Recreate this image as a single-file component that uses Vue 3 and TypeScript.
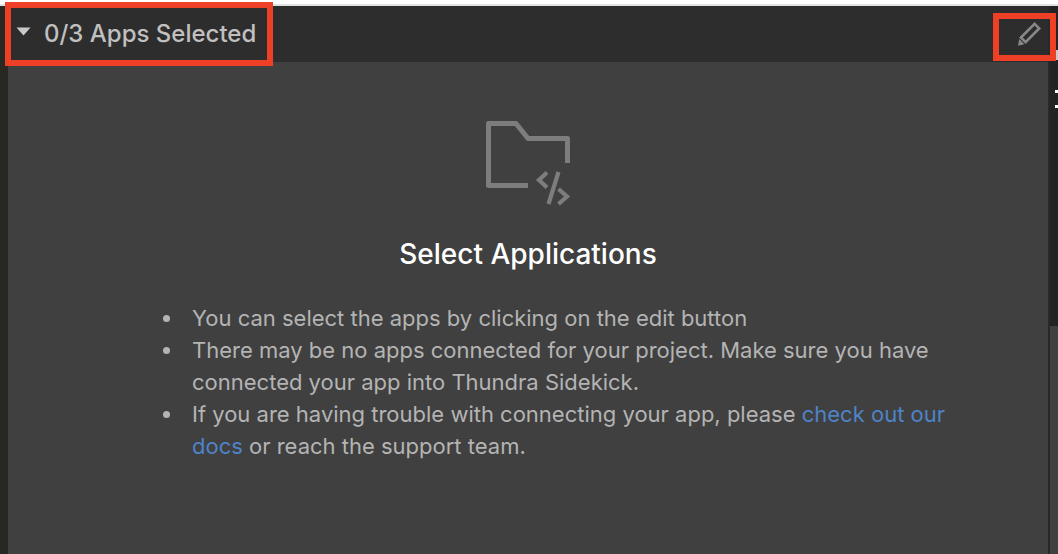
<script setup lang="ts">
import { ref } from 'vue'

const total = 3
const selected = ref<string[]>([])
const expanded = ref(true)
const docsUrl = '#docs'
</script>

<template>
  <div class="page">
    <div class="top-edge"></div>
    <div class="workspace">
      <div class="rail-left"></div>
      <section class="panel">
        <header class="panel-header">
          <button class="toggle" type="button" :aria-expanded="expanded" @click="expanded = !expanded">
            <svg class="caret" viewBox="0 0 15 14" aria-hidden="true"><path d="M0.5 0.5H14.5L7.5 8.5Z" /></svg>
            <span>{{ selected.length }}/{{ total }} Apps Selected</span>
          </button>
          <button class="edit" type="button" aria-label="Edit">
            <svg class="pencil" viewBox="0 0 26 26" aria-hidden="true">
              <path class="pencil-body" d="M18.6 2.8L23.2 7.4L9.6 21.2L4.9 16.5Z" />
              <path class="pencil-tip" d="M3.2 18L8.4 23.2L2 24.8Z" />
            </svg>
          </button>
        </header>
        <div v-if="expanded" class="panel-body">
          <svg class="folder" viewBox="0 0 88 88" aria-hidden="true">
            <path class="folder-line" d="M44 67.5H4.5V5.5H32L44 20.5H83.5V45" />
            <path class="code-line" d="M63 54.5L55 62L63 69.5M74.5 54L64.5 86M74.5 71L83 78.5L74.5 86" />
          </svg>
          <h1>Select Applications</h1>
          <ul>
            <li>You can select the apps by clicking on the edit button</li>
            <li>There may be no apps connected for your project. Make sure you have connected your app into Thundra Sidekick.</li>
            <li>If you are having trouble with connecting your app, please <a :href="docsUrl">check out our docs</a> or reach the support team.</li>
          </ul>
        </div>
      </section>
      <div class="rail-right">
        <span class="chip"></span>
        <span class="dash"></span>
        <span class="dash"></span>
        <div class="side-panel"></div>
      </div>
    </div>
  </div>
</template>

<style>
body {
  margin: 0;
  background: #404040;
}
</style>

<style scoped>
.page {
  display: flex;
  flex-direction: column;
  min-height: 100vh;
  font-family: Inter, "Liberation Sans", sans-serif;
  color: #b4b4b4;
}

.top-edge {
  height: 4px;
  background: #fff;
  border-bottom: 2px solid #dfe1e3;
}

.workspace {
  flex: 1;
  display: grid;
  grid-template-columns: 8px 1fr 10px;
}

.rail-left {
  background: #282823;
}

.panel {
  background: #404040;
}

.panel-header {
  display: flex;
  justify-content: space-between;
  height: 56px;
  background: #2d2d2d;
}

button {
  position: relative;
  display: flex;
  align-items: center;
  padding: 0;
  border: 0;
  background: none;
  color: #c0c0c0;
  font: inherit;
  cursor: pointer;
}

button::after {
  content: "";
  position: absolute;
  border: 6px solid #ed4026;
}

.toggle {
  gap: 13px;
  padding-left: 8px;
  font-size: 24px;
  font-weight: 500;
  line-height: 32px;
}

.toggle::after {
  inset: -4px -17px -4px -3px;
}

.caret {
  width: 15px;
  height: 14px;
  fill: #c9c9c9;
}

.edit {
  padding-right: 6px;
}

.edit::after {
  inset: 7px -8px 1px -23px;
}

.pencil {
  width: 26px;
  height: 26px;
}

.pencil-body {
  fill: none;
  stroke: #878787;
  stroke-width: 2.6;
}

.pencil-tip {
  fill: #878787;
}

.panel-body {
  display: flex;
  flex-direction: column;
  padding: 56px 96px 48px 144px;
}

.folder {
  align-self: center;
  width: 88px;
  height: 88px;
  margin-right: 48px;
  fill: none;
  stroke: #7d7d7d;
  stroke-width: 5;
}

.folder-line {
  stroke-linejoin: round;
}

.code-line {
  stroke-width: 4.2;
}

h1 {
  margin: 30px 48px 30px 0;
  color: #fff;
  font-size: 28px;
  font-weight: 500;
  line-height: 36px;
  text-align: center;
}

ul {
  margin: 0;
  padding-left: 32px;
  font-size: 22px;
  line-height: 32px;
}

li {
  padding-left: 8px;
}

a {
  color: #4f83c8;
  text-decoration: none;
}

.rail-right {
  display: flex;
  flex-direction: column;
  align-items: flex-end;
  background: #232323;
  border-left: 2px solid #292929;
  box-sizing: border-box;
}

.chip {
  width: 2px;
  height: 10px;
  margin: 44px 0 30px;
  background: #c9c9c9;
}

.dash {
  width: 3px;
  height: 3px;
  margin-bottom: 12px;
  background: #fff;
}

.side-panel {
  flex: 1;
  align-self: stretch;
  margin-top: 206px;
  background: #404040;
}
</style>
